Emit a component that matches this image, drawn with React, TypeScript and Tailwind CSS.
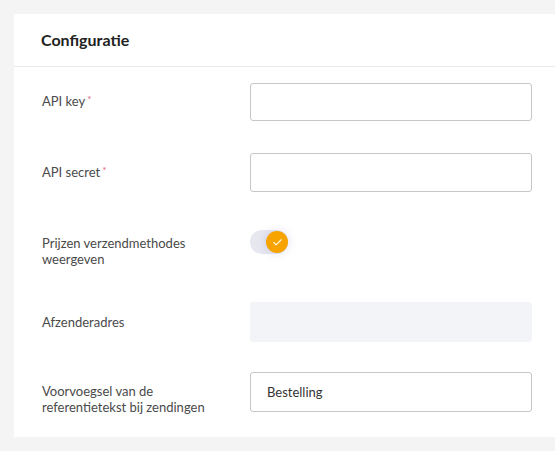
import { Check } from "lucide-react";

const Label = ({ text, required, pt }: { text: string; required?: boolean; pt: string }) => (
  <div className={`w-[208px] shrink-0 pr-6 text-[13px] leading-[16px] text-[#4a4a4a] ${pt}`}>
    {text}
    {required && <span className="ml-[2px] align-top text-[10px] leading-[12px] text-[#e0607a]">*</span>}
  </div>
);

export default function App() {
  return (
    <div className="min-h-[451px] bg-[#f4f4f4] pt-[14px] pl-[14px]" style={{ fontFamily: "Lato, 'Open Sans', sans-serif" }}>
      <div className="w-[541px] bg-white pb-[22px]">
        <div className="flex h-[53px] items-center border-b border-[#ebebeb] pl-[27px] pb-[1px]">
          <h2 className="text-[16px] leading-[20px] font-bold text-[#222]">Configuratie</h2>
        </div>

        <div className="flex flex-col pl-[28px] pt-[16px]">
          <div className="flex items-start">
            <Label text="API key" required pt="pt-[10px]" />
            <input className="h-[38px] w-[282px] rounded-[3px] border border-[#c6c6c6] px-4 text-[13px] outline-none" />
          </div>

          <div className="mt-[32px] flex items-start">
            <Label text="API secret" required pt="pt-[11px]" />
            <input className="h-[39px] w-[282px] rounded-[3px] border border-[#c6c6c6] px-4 text-[13px] outline-none" />
          </div>

          <div className="mt-[31px] flex items-start">
            <Label text="Prijzen verzendmethodes weergeven" pt="pt-[12px]" />
            <div className="flex h-[38px] items-center">
              <div className="relative h-[24px] w-[38px] rounded-full bg-[#e6e7ef]">
                <div className="absolute top-[1px] right-0 flex h-[22px] w-[22px] items-center justify-center rounded-full bg-[#f7a400] shadow-[0_0_8px_rgba(120,120,200,0.25)]">
                  <Check size={11} strokeWidth={2.5} className="text-white/90" />
                </div>
              </div>
            </div>
          </div>

          <div className="mt-[35px] flex items-start">
            <Label text="Afzenderadres" pt="pt-[12px]" />
            <div className="h-[40px] w-[282px] rounded-[3px] bg-[#f3f4f8]" />
          </div>

          <div className="mt-[30px] flex items-start">
            <Label text="Voorvoegsel van de referentietekst bij zendingen" pt="pt-[11px]" />
            <input
              defaultValue="Bestelling"
              className="h-[40px] w-[282px] rounded-[3px] border border-[#c6c6c6] px-4 text-[13px] text-[#333] outline-none"
            />
          </div>
        </div>
      </div>
    </div>
  );
}
